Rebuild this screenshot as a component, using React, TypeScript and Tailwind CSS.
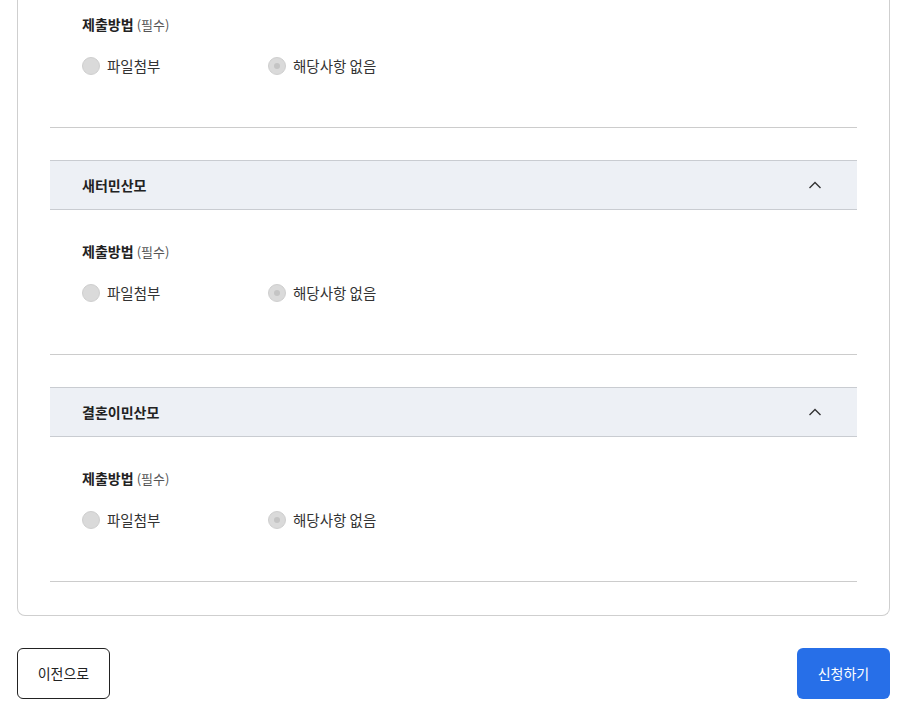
const sections = [
  { title: null as string | null },
  { title: "새터민산모" },
  { title: "결혼이민산모" },
];

function Radio({ label, dotted }: { label: string; dotted?: boolean }) {
  return (
    <label className="flex w-[186px] items-center gap-[7px]">
      <span className="flex h-[18px] w-[18px] items-center justify-center rounded-full border border-[#cfcfcf] bg-[#dadada]">
        {dotted && <span className="h-[6px] w-[6px] rounded-full bg-[#c4c4c4]" />}
      </span>
      <span className="text-[14.5px] leading-5 text-[#333]">{label}</span>
    </label>
  );
}

function Chevron() {
  return (
    <svg width="14" height="8" viewBox="0 0 14 8" fill="none">
      <path d="M1.5 7 L7 1.5 L12.5 7" stroke="#333" strokeWidth="1.4" />
    </svg>
  );
}

export default function App() {
  return (
    <div className="min-h-[716px] bg-white pb-[17px] font-['Noto_Sans_CJK_KR','Noto_Sans',sans-serif]">
      <div className="ml-[17px] w-[873px]">
        <div className="rounded-b-lg border-x border-b border-[#cfcfcf] px-8 pb-[33px]">
          <div className="space-y-8">
            {sections.map((s, i) => (
              <div key={i} className="border-b border-[#cccccc]">
                {s.title && (
                  <div className="flex h-[50px] items-center justify-between border-y border-[#c9ccd1] bg-[#edf0f5] pl-8 pr-[35px]">
                    <span className="text-[14px] font-bold text-[#222]">{s.title}</span>
                    <Chevron />
                  </div>
                )}
                <div className={`px-8 pb-[51px] ${s.title ? "pt-[31px]" : "pt-[14px]"}`}>
                  <p className="text-[14px] leading-5 text-[#222]">
                    <span className="font-bold">제출방법</span>{" "}
                    <span className="text-[13px] text-[#555]">(필수)</span>
                  </p>
                  <div className="mt-[21px] flex">
                    <Radio label="파일첨부" />
                    <Radio label="해당사항 없음" dotted />
                  </div>
                </div>
              </div>
            ))}
          </div>
        </div>
        <div className="mt-[32px] flex justify-between">
          <button className="h-[51px] w-[93px] rounded-md border border-[#222] bg-white text-[14px] text-[#222]">
            이전으로
          </button>
          <button className="h-[51px] w-[93px] rounded-md bg-[#276fe8] text-[14px] text-white">
            신청하기
          </button>
        </div>
      </div>
    </div>
  );
}
